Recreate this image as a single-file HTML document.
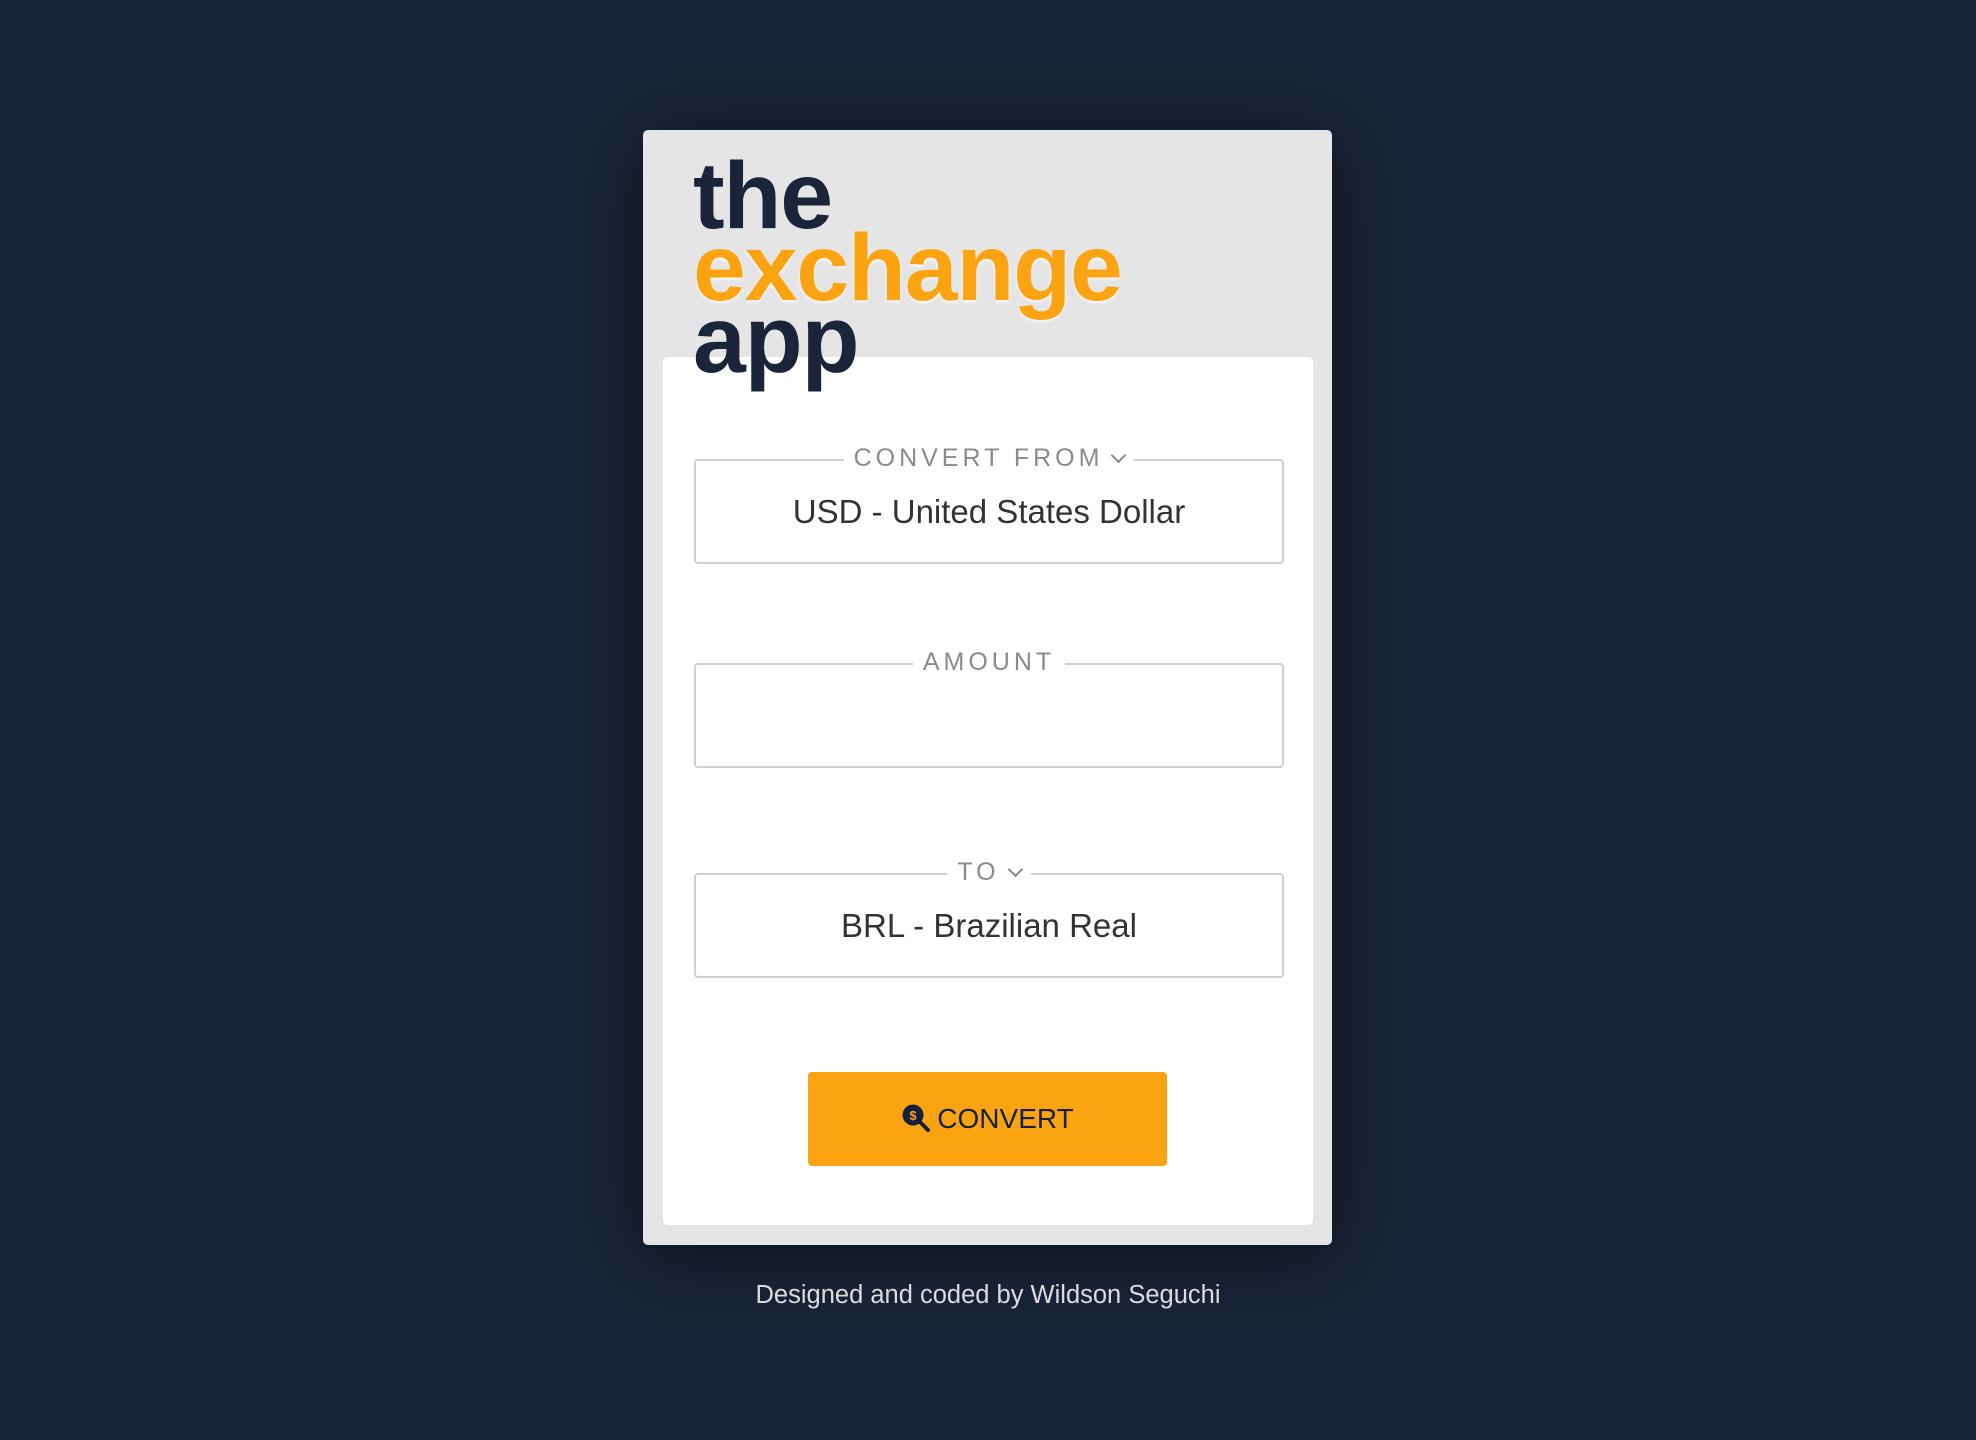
<!DOCTYPE html>
<html><head><meta charset="utf-8"><style>
*{box-sizing:border-box;margin:0;padding:0}
html,body{width:1976px;height:1440px;background:#1b2539;overflow:hidden;font-family:"Liberation Sans",sans-serif}
.card{position:absolute;left:643px;top:130px;width:689px;height:1115px;background:#e5e5e5;border-radius:5px;box-shadow:0 10px 80px rgba(0,0,0,.55)}
.inner{position:absolute;left:20px;top:227px;width:650px;height:868px;background:#fff;border-radius:5px}
.title{position:absolute;left:50px;top:30px;font-weight:bold;font-size:95px;line-height:72px;letter-spacing:-1.2px;color:#1b2439;z-index:2}
.title .o{color:#fca311;text-shadow:0 2px 3px rgba(255,255,255,.8)}
.fs{position:absolute;left:31px;width:590px;height:105px;border:2px solid #cfcfcf;border-radius:4px}
.lg{position:absolute;left:0;right:0;top:-18px;text-align:center;line-height:30px}
.lg span{background:#fff;padding:0 10px;color:#8a8a8a;font-size:25px;letter-spacing:4px}
.val{position:absolute;left:0;right:0;top:32px;text-align:center;font-size:33px;color:#333}
.chev{display:inline-block;width:11px;height:11px;border-right:2px solid #8a8a8a;border-bottom:2px solid #8a8a8a;transform:rotate(45deg);margin-left:10px;position:relative;top:-5px}
.btn{position:absolute;left:145px;top:715px;width:359px;height:94px;background:#fca311;border-radius:4px;text-align:center;line-height:94px;font-size:28px;color:#14213d}
.foot{position:absolute;left:0;width:1976px;top:1281px;text-align:center;color:#dcdcdc;font-size:25.5px}
</style></head><body>
<div class="card">
<div class="title">the<br><span class="o">exchange</span><br>app</div>
<div class="inner">
<div class="fs" style="top:102px"><div class="lg"><span>CONVERT FROM<i class="chev"></i></span></div><div class="val">USD - United States Dollar</div></div>
<div class="fs" style="top:306px"><div class="lg"><span>AMOUNT</span></div></div>
<div class="fs" style="top:516px"><div class="lg"><span>TO<i class="chev"></i></span></div><div class="val">BRL - Brazilian Real</div></div>
<div class="btn"><svg width="30" height="30" viewBox="0 0 30 30" style="vertical-align:-5px;margin-right:6px"><circle cx="12" cy="12" r="10.5" fill="#14213d"/><line x1="19" y1="19" x2="27" y2="27" stroke="#14213d" stroke-width="4" stroke-linecap="round"/><text x="12" y="17" font-size="13" font-weight="bold" text-anchor="middle" fill="#fca311" font-family="Liberation Sans">$</text></svg>CONVERT</div>
</div>
</div>
<div class="foot">Designed and coded by Wildson Seguchi</div>
</body></html>
